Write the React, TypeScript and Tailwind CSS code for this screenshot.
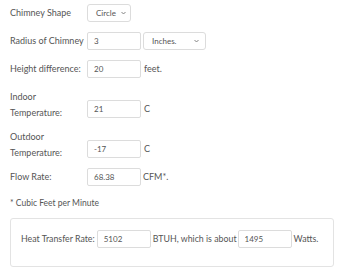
import React from "react";

function Field({ value }: { value: string }) {
  return (
    <input
      readOnly
      value={value}
      className="w-[54px] shrink-0 h-[18px] border border-[#dcdcdc] rounded-[2px] px-[6px] text-[8px] text-[#555] bg-white outline-none"
    />
  );
}

function Select({ value, w, pr }: { value: string; w: string; pr: string }) {
  return (
    <div className={`${w} ${pr} shrink-0 h-[18px] border border-[#dcdcdc] rounded-[3px] flex items-center justify-between pl-[8px] text-[8px] text-[#555] bg-white`}>
      <span>{value}</span>
      <svg width="5" height="4" viewBox="0 0 5 4" fill="none">
        <path d="M0.5 1 L2.5 3 L4.5 1" stroke="#777" strokeWidth="0.9" />
      </svg>
    </div>
  );
}

export default function App() {
  return (
    <div className="w-[339px] h-[270px] bg-white text-[9px] text-[#555] overflow-hidden whitespace-nowrap" style={{ fontFamily: "Lato, 'Open Sans', sans-serif" }}>
      <div className="pl-[10px] pt-[4px] flex flex-col">
        <div className="flex items-center h-[18px]">
          <span className="w-[77px] shrink-0">Chimney Shape</span>
          <Select value="Circle" w="w-[44px]" pr="pr-[4px]" />
        </div>
        <div className="flex items-center h-[18px] mt-[10px]">
          <span className="w-[77px] shrink-0">Radius of Chimney</span>
          <Field value="3" />
          <div className="ml-[2px]">
            <Select value="Inches." w="w-[63px]" pr="pr-[6px]" />
          </div>
        </div>
        <div className="flex items-center h-[18px] mt-[10px]">
          <span className="w-[77px] shrink-0">Height difference:</span>
          <Field value="20" />
          <span className="ml-[3px]">feet.</span>
        </div>
        <div className="flex items-start mt-[11px]">
          <span className="w-[77px] shrink-0 leading-[16px]">Indoor<br />Temperature:</span>
          <div className="flex items-center mt-[11px]">
            <Field value="21" />
            <span className="ml-[3px]">C</span>
          </div>
        </div>
        <div className="flex items-start mt-[8px]">
          <span className="w-[77px] shrink-0 leading-[16px]">Outdoor<br />Temperature:</span>
          <div className="flex items-center mt-[11px]">
            <Field value="-17" />
            <span className="ml-[3px]">C</span>
          </div>
        </div>
        <div className="flex items-center h-[18px] mt-[7px]">
          <span className="w-[77px] shrink-0">Flow Rate:</span>
          <Field value="68.38" />
          <span className="ml-[2px]">CFM*.</span>
        </div>
        <div className="mt-[11px] text-[8.5px] leading-[12px]">* Cubic Feet per Minute</div>
        <div className="mt-[9px] mr-[5px] h-[49px] border border-[#e3e3e3] rounded-[3px] pt-[11px] pl-[10px]">
          <div className="flex items-center h-[17px] text-[8.8px]">
            <span className="mr-[2px]">Heat Transfer Rate:</span>
            <Field value="5102" />
            <span className="ml-[2px] mr-[1px]">BTUH, which is about</span>
            <Field value="1495" />
            <span className="ml-[2px]">Watts.</span>
          </div>
        </div>
      </div>
    </div>
  );
}
